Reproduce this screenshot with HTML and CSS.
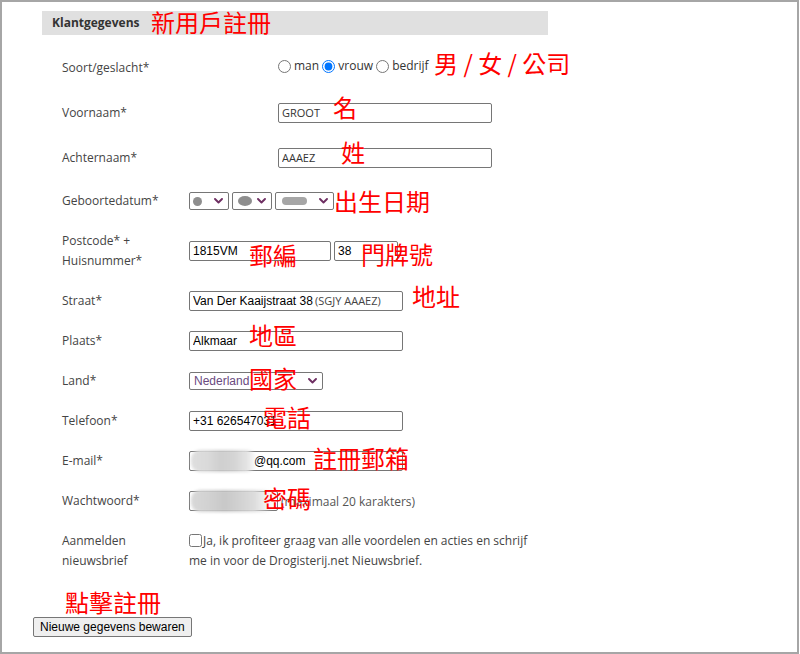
FILE: index.html
```html
<!DOCTYPE html>
<html lang="nl">
<head>
<meta charset="utf-8">
<title>Klantgegevens</title>
<link rel="stylesheet" href="styles.css">
</head>
<body>
<div class="frame">
  <div class="page">
    <div class="section-head">Klantgegevens</div>

    <div class="table table-a">
      <div class="row">
        <div class="label">Soort/geslacht*</div>
        <div class="control radios">
          <label class="opt"><input type="radio" name="g">man</label>
          <label class="opt"><input type="radio" name="g" checked>vrouw</label>
          <label class="opt"><input type="radio" name="g">bedrijf</label>
        </div>
      </div>
      <div class="row">
        <div class="label">Voornaam*</div>
        <div class="control"><input class="field field-os" type="text" value="GROOT"></div>
      </div>
      <div class="row">
        <div class="label">Achternaam*</div>
        <div class="control"><input class="field field-os" type="text" value="AAAEZ"></div>
      </div>
    </div>

    <div class="table table-b">
      <div class="row">
        <div class="label">Geboortedatum*</div>
        <div class="control selects">
          <div class="select sel-day"><span class="blob blob-day"></span><svg class="chev" width="9" height="6" viewBox="0 0 9 6"><path d="M1 1l3.5 3.5L8 1" /></svg></div>
          <div class="select sel-month"><span class="blob blob-month"></span><svg class="chev" width="9" height="6" viewBox="0 0 9 6"><path d="M1 1l3.5 3.5L8 1" /></svg></div>
          <div class="select sel-year"><span class="blob blob-year"></span><svg class="chev" width="9" height="6" viewBox="0 0 9 6"><path d="M1 1l3.5 3.5L8 1" /></svg></div>
        </div>
      </div>
      <div class="row row-tall">
        <div class="label">Postcode* +<br>Huisnummer*</div>
        <div class="control pair">
          <input class="field field-postcode" type="text" value="1815VM">
          <input class="field field-nr" type="text" value="38">
        </div>
      </div>
      <div class="row">
        <div class="label">Straat*</div>
        <div class="control">
          <span class="wrap"><input class="field" type="text" value="Van Der Kaaijstraat 38"><span class="inline-note">(SGJY AAAEZ)</span></span>
        </div>
      </div>
      <div class="row">
        <div class="label">Plaats*</div>
        <div class="control"><input class="field" type="text" value="Alkmaar"></div>
      </div>
      <div class="row">
        <div class="label">Land*</div>
        <div class="control">
          <div class="select sel-land"><span class="sel-text">Nederland</span><svg class="chev" width="9" height="6" viewBox="0 0 9 6"><path d="M1 1l3.5 3.5L8 1" /></svg></div>
        </div>
      </div>
      <div class="row">
        <div class="label">Telefoon*</div>
        <div class="control"><input class="field" type="text" value="+31 626547031"></div>
      </div>
      <div class="row">
        <div class="label">E-mail*</div>
        <div class="control">
          <span class="wrap"><input class="field field-mail" type="text" value="@qq.com"><span class="blur blur-mail"></span></span>
        </div>
      </div>
      <div class="row">
        <div class="label">Wachtwoord*</div>
        <div class="control">
          <span class="wrap"><input class="field field-pass" type="password" value=""><span class="blur blur-pass"></span></span>
          <span class="hint">(maximaal 20 karakters)</span>
        </div>
      </div>
      <div class="row row-tall">
        <div class="label">Aanmelden<br>nieuwsbrief</div>
        <div class="control">
          <p class="optin"><input type="checkbox" class="check">Ja, ik profiteer graag van alle voordelen en acties en schrijf me in voor de Drogisterij.net Nieuwsbrief.</p>
        </div>
      </div>
    </div>

    <button class="save" type="button">Nieuwe gegevens bewaren</button>
  </div>

  <span class="cn cn-1">新用戶註冊</span>
  <span class="cn cn-2">男 / 女 / 公司</span>
  <span class="cn cn-3">名</span>
  <span class="cn cn-4">姓</span>
  <span class="cn cn-5">出生日期</span>
  <span class="cn cn-6">郵編</span>
  <span class="cn cn-7">門牌號</span>
  <span class="cn cn-8">地址</span>
  <span class="cn cn-9">地區</span>
  <span class="cn cn-10">國家</span>
  <span class="cn cn-11">電話</span>
  <span class="cn cn-12">註冊郵箱</span>
  <span class="cn cn-13">密碼</span>
  <span class="cn cn-14">點擊註冊</span>
</div>
</body>
</html>
```

FILE: styles.css
```css
html, body {
  margin: 0;
  padding: 0;
  background: #ffffff;
}

body {
  font-family: "Open Sans", "Liberation Sans", sans-serif;
  font-size: 12px;
  color: #444;
}

.frame {
  position: relative;
  width: 799px;
  height: 654px;
  box-sizing: border-box;
  box-shadow: inset 0 0 0 2px #a6a6a6;
  overflow: hidden;
}

.page {
  padding: 11px 0 0 33px;
}

.section-head {
  margin-left: 9px;
  width: 506px;
  height: 24px;
  box-sizing: border-box;
  padding-left: 10px;
  background: #e0e0e0;
  font-weight: 700;
  font-size: 12px;
  line-height: 24px;
  color: #333;
}

.table {
  margin-left: 29px;
}

.table-a {
  margin-top: 10px;
}

.table-b {
  margin-top: 1px;
}

.row {
  display: flex;
  align-items: center;
  height: 40px;
}

.table-a .row {
  height: 45px;
}

.row-tall {
  height: 60px;
}

.label {
  line-height: 20px;
  color: #444;
  flex: none;
}

.table-a .label {
  width: 216px;
}

.table-b .label {
  width: 127px;
}

.control {
  display: flex;
  align-items: center;
}

/* radios */
.radios {
  color: #333;
  line-height: 20px;
  display: block;
  white-space: nowrap;
}

.opt {
  display: inline-flex;
  align-items: center;
}

.opt input {
  width: 13px;
  height: 13px;
  margin: 0 3px 0 0;
}

/* inputs */
.field {
  width: 214px;
  height: 20px;
  box-sizing: border-box;
  margin: 0;
  padding: 0 3px;
  border: 1px solid #767676;
  border-radius: 2px;
  background: #fff;
  font-family: "Liberation Sans", Arial, sans-serif;
  font-size: 12px;
  color: #000;
  outline: none;
}

.field-os {
  font-family: "Open Sans", sans-serif;
  font-size: 11px;
  color: #333;
}

.pair {
  gap: 3px;
}

.field-postcode {
  width: 142px;
}

.field-nr {
  width: 64px;
}

.field-mail {
  padding-left: 64px;
}

.field-pass {
  width: 89px;
}

.wrap {
  position: relative;
  display: inline-block;
  height: 20px;
}

.inline-note {
  position: absolute;
  left: 126px;
  top: 3px;
  font-family: "Open Sans", sans-serif;
  font-size: 11px;
  line-height: 14px;
  color: #444;
  white-space: nowrap;
}

.blur {
  position: absolute;
  border-radius: 9px;
  filter: blur(1.5px);
}

.blur-mail {
  left: 2px;
  top: -1px;
  width: 66px;
  height: 22px;
  background: linear-gradient(90deg, #dedede 0%, #dadada 25%, #cfcfcf 45%, #d4d4d4 65%, #e4e4e4 85%, rgba(255,255,255,0) 100%);
}

.blur-pass {
  left: 2px;
  top: -1px;
  width: 84px;
  height: 22px;
  background: linear-gradient(90deg, #d8d8d8 0%, #d2d2d2 20%, #c8c8c8 40%, #d0d0d0 55%, #dcdcdc 75%, rgba(255,255,255,0) 100%);
}

.hint {
  margin-left: 3px;
  color: #555;
  white-space: nowrap;
}

/* fake selects */
.selects {
  gap: 3px;
}

.select {
  display: inline-flex;
  align-items: center;
  justify-content: space-between;
  height: 18px;
  box-sizing: border-box;
  padding: 0 5px 0 3px;
  border: 1px solid #767676;
  border-radius: 2px;
  background: #fff;
  font-family: "Liberation Sans", Arial, sans-serif;
  font-size: 12px;
  color: #6a4a80;
}

.sel-day { width: 40px; }
.sel-month { width: 40px; }
.sel-year { width: 59px; padding-left: 6px; }
.sel-land { width: 134px; padding-left: 4px; }

.chev {
  flex: none;
}

.chev path {
  fill: none;
  stroke: #6e2f62;
  stroke-width: 1.9;
  stroke-linecap: round;
  stroke-linejoin: round;
}

.blob {
  display: block;
  background: #8e8e8e;
  filter: blur(0.6px);
}

.blob-day {
  width: 9px;
  height: 9px;
  border-radius: 50%;
}

.blob-month {
  width: 14px;
  height: 10px;
  border-radius: 50%;
  margin-left: 2px;
}

.blob-year {
  width: 25px;
  height: 8px;
  border-radius: 4px;
  background: #a6a6a6;
}

/* opt-in */
.optin {
  margin: 0;
  width: 350px;
  line-height: 20px;
  color: #444;
}

.check {
  width: 13px;
  height: 13px;
  margin: 0 1px 0 0;
  vertical-align: -2px;
}

/* button */
.save {
  display: block;
  margin-top: 36px;
  height: 20px;
  padding: 0 6px;
  border: 1px solid #767676;
  border-radius: 2px;
  background: #efefef;
  font-family: "Liberation Sans", Arial, sans-serif;
  font-size: 12px;
  color: #000;
}

/* red annotations */
.cn {
  position: absolute;
  color: #ff0000;
  font-family: "Noto Sans CJK TC", "Noto Sans CJK SC", sans-serif;
  font-size: 24px;
  line-height: 24px;
  white-space: nowrap;
}

.cn-1 { left: 151px; top: 10px; }
.cn-2 { left: 434px; top: 51px; }
.cn-3 { left: 333px; top: 95px; }
.cn-4 { left: 341px; top: 140px; }
.cn-5 { left: 334px; top: 189px; }
.cn-6 { left: 249px; top: 243px; }
.cn-7 { left: 361px; top: 242px; }
.cn-8 { left: 412px; top: 284px; }
.cn-9 { left: 249px; top: 323px; }
.cn-10 { left: 249px; top: 366px; }
.cn-11 { left: 263px; top: 405px; }
.cn-12 { left: 313px; top: 446px; }
.cn-13 { left: 263px; top: 486px; }
.cn-14 { left: 65px; top: 590px; }
```
